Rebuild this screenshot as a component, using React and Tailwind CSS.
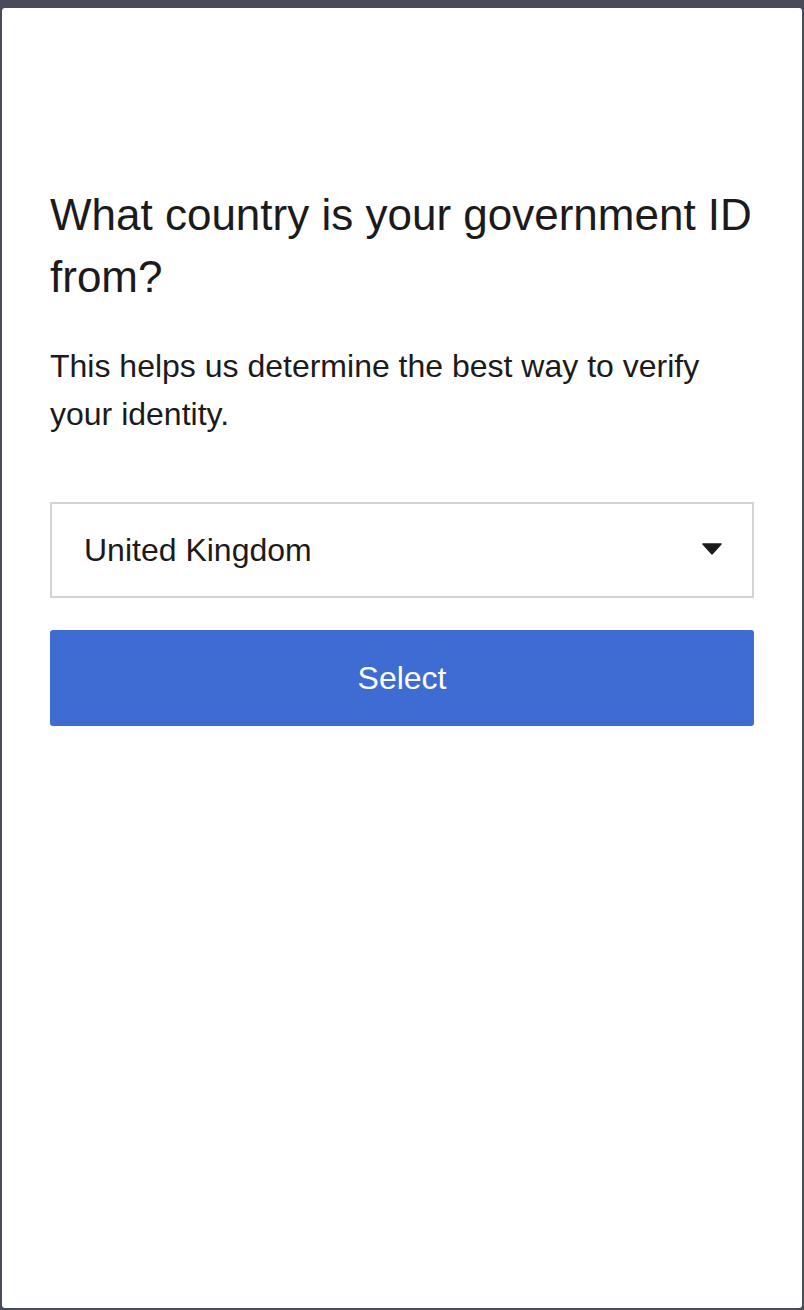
import React from "react";

const App = () => {
  return (
    <div className="min-h-screen bg-[#4a4b5a] pt-2 px-[2px] pb-[2px] flex flex-col font-['Liberation_Sans',Arial,sans-serif]">
      <div className="flex-1 bg-white rounded-[3px] px-12 pt-[176px]">
        <h1 className="text-[44px] leading-[62px] text-[#1c1a1a] font-normal">
          What country is your government ID from?
        </h1>
        <p className="mt-[34px] text-[32px] leading-[48px] text-[#1c1a1a]">
          This helps us determine the best way to verify your identity.
        </p>

        <div className="mt-16 h-24 border-2 border-[#d3d3d3] flex items-center justify-between pl-[32px] pr-[30px]">
          <span className="text-[32px] text-[#1c1a1a]">United Kingdom</span>
          <svg width="20" height="12" viewBox="0 0 20 12" className="mt-[-2px]">
            <path d="M1 1 L19 1 L10 11 Z" fill="#1c1a1a" stroke="#1c1a1a" strokeLinejoin="round" strokeWidth="1.5" />
          </svg>
        </div>

        <button
          type="button"
          className="mt-8 w-full h-24 bg-[#3e6cd2] rounded-[3px] text-white text-[32px]"
        >
          Select
        </button>
      </div>
    </div>
  );
};

export default App;
